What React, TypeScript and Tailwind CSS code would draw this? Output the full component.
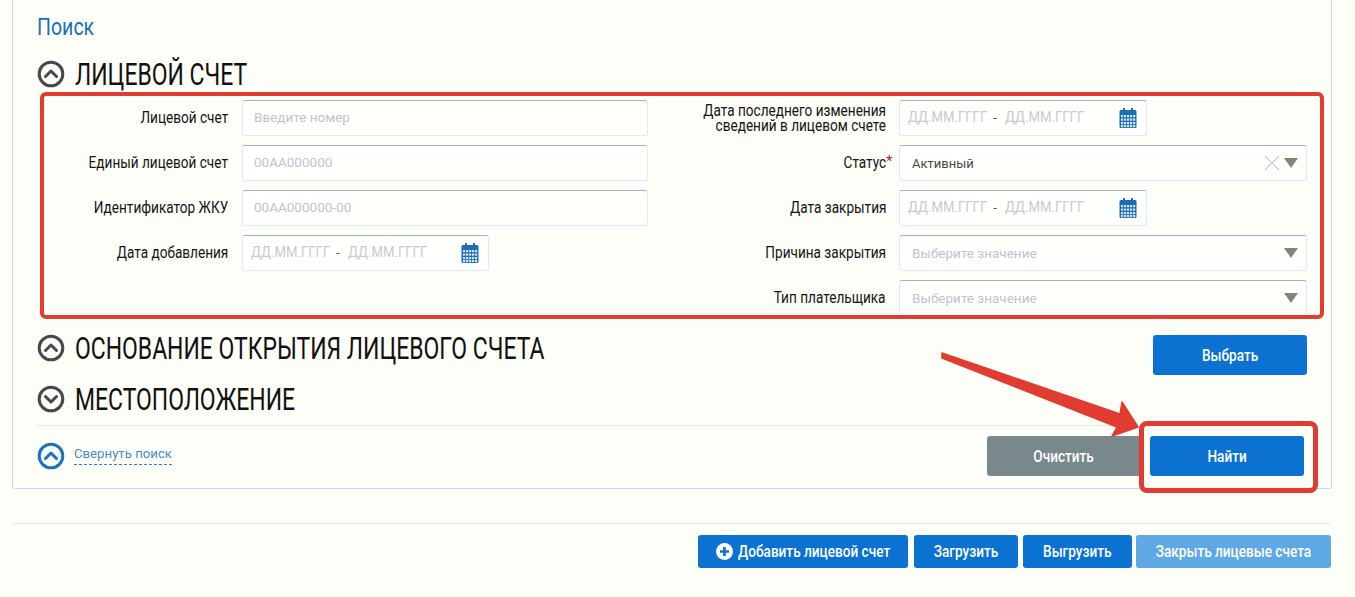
const FONT = "font-['Roboto','Liberation_Sans',sans-serif]";

function Chevron({ down = false, blue = false }: { down?: boolean; blue?: boolean }) {
  const c = blue ? "#1673c4" : "#48484c";
  return (
    <svg width="28" height="28" viewBox="0 0 28 28" className="shrink-0">
      <circle cx="14" cy="14" r="11.8" fill="none" stroke={c} strokeWidth="3" />
      <path d={down ? "M8.5 11.5 L14 17 L19.5 11.5" : "M8.5 16.5 L14 11 L19.5 16.5"} fill="none" stroke={c} strokeWidth="3" strokeLinecap="round" strokeLinejoin="round" />
    </svg>
  );
}

function Calendar() {
  return (
    <svg width="18" height="20" viewBox="0 0 18 20" className="shrink-0">
      <rect x="4" y="0" width="2" height="4" fill="#1b6db5" />
      <rect x="12" y="0" width="2" height="4" fill="#1b6db5" />
      <rect x="0.5" y="2" width="17" height="18" rx="1.5" fill="#1b6db5" />
      <g fill="#cfe3f4">
        {[7, 10.5, 14, 17].map((y) =>
          [2, 5, 8, 11, 14].map((x) => <rect key={`${x}-${y}`} x={x} y={y} width="2.2" height="2.2" />)
        )}
      </g>
    </svg>
  );
}

function Narrow({ children, k = "left" }: { children: React.ReactNode; k?: "left" | "right" | "center" }) {
  const o = k === "left" ? "origin-left" : k === "right" ? "origin-right text-right" : "origin-center";
  return <span className={`inline-block whitespace-nowrap scale-x-[0.85] ${o}`}>{children}</span>;
}

function Label({ children, w }: { children: React.ReactNode; w: string }) {
  return (
    <div className={`${w} shrink-0 text-right text-[16px] leading-[15px] text-[#141414] pb-[1px]`}>
      {children}
    </div>
  );
}

const box = "h-[36px] rounded-[3px] border border-[#d8ecf9] border-t-[#9db4bd] flex items-center bg-[#fffffb]";

function TextInput({ ph }: { ph: string }) {
  return (
    <div className={`${box} w-[406px] pl-[11px] pb-[1px] text-[13.5px] text-[#c4bfd2]`}>{ph}</div>
  );
}

function DateInput({ w }: { w: string }) {
  return (
    <div className={`${box} ${w} pl-[8px] pr-[9px] text-[15.5px] text-[#c6cad6]`}>
      <div className="w-[77px]"><Narrow>ДД.ММ.ГГГГ</Narrow></div>
      <div className="w-[20px] text-center text-[#555] text-[13px]">-</div>
      <div className="w-[77px]"><Narrow>ДД.ММ.ГГГГ</Narrow></div>
      <div className="ml-auto"><Calendar /></div>
    </div>
  );
}

function Arrow() {
  return (
    <svg width="14" height="10" viewBox="0 0 14 10" className="shrink-0">
      <path d="M0 0 H14 L7 10 Z" fill="#84847a" />
    </svg>
  );
}

function Select({ value, ph, clear }: { value?: string; ph?: string; clear?: boolean }) {
  return (
    <div className={`${box} w-[408px] pl-[12px] pr-[8px] ${value ? "text-[13px] text-[#4a4a4a]" : "text-[13.5px] text-[#c2c2c8]"}`}>
      <span className="pt-[1px]">{value ?? ph}</span>
      <div className="ml-auto flex items-center gap-[4px]">
        {clear && (
          <svg width="16" height="16" viewBox="0 0 16 16">
            <path d="M1 1 L15 15 M15 1 L1 15" stroke="#c3ccd4" strokeWidth="1.2" />
          </svg>
        )}
        <Arrow />
      </div>
    </div>
  );
}

function Heading({ children, down }: { children: string; down?: boolean }) {
  return (
    <div className="flex items-center gap-[10px] h-[30px]">
      <Chevron down={down} />
      <span className="text-[31px] leading-[30px] pt-[2px] text-[#111] font-normal inline-block whitespace-nowrap origin-left scale-x-[0.74]">
        {children}
      </span>
    </div>
  );
}

function Btn({ children, w, h, bg = "bg-[#0b72d2]" }: { children: React.ReactNode; w: string; h: string; bg?: string }) {
  return (
    <div className={`${w} ${h} ${bg} rounded-[3px] flex items-center justify-center text-white text-[16px] font-medium`}>
      {children}
    </div>
  );
}

export default function App() {
  return (
    <div className={`${FONT} relative w-[1355px] h-[597px] overflow-hidden bg-[#fefef8]`}>
      <div className="ml-[12px] w-[1320px] h-[489px] border-x border-b border-[#bddcf1] rounded-b-[3px] pl-[24px] pr-[24px] pt-[15px]">
        <div className="text-[23px] leading-[26px] text-[#1a70b8]"><Narrow>Поиск</Narrow></div>

        <div className="mt-[18px]"><Heading>ЛИЦЕВОЙ СЧЕТ</Heading></div>

        <div className="mt-[11px] flex h-[214px] overflow-hidden">
          <div className="w-[611px] shrink-0 flex flex-col gap-[9px]">
            {[
              ["Лицевой счет", <TextInput ph="Введите номер" />],
              ["Единый лицевой счет", <TextInput ph="00АА000000" />],
              ["Идентификатор ЖКУ", <TextInput ph="00АА000000-00" />],
              ["Дата добавления", <DateInput w="w-[247px]" />],
            ].map(([l, c], i) => (
              <div key={i} className="flex items-center gap-[14px]">
                <Label w="w-[191px]"><Narrow k="right">{l}</Narrow></Label>
                {c}
              </div>
            ))}
          </div>
          <div className="flex-1 flex flex-col gap-[9px]">
            <div className="flex items-center gap-[13px]">
              <Label w="w-[238px]">
                <Narrow k="right">Дата последнего изменения<br />сведений в лицевом счете</Narrow>
              </Label>
              <DateInput w="w-[248px]" />
            </div>
            <div className="flex items-center gap-[13px]">
              <Label w="w-[238px]">
                <Narrow k="right">Статус</Narrow>
                <span className="absolute text-[#a52a2a] text-[15px] leading-[12px]">*</span>
              </Label>
              <Select value="Активный" clear />
            </div>
            <div className="flex items-center gap-[13px]">
              <Label w="w-[238px]"><Narrow k="right">Дата закрытия</Narrow></Label>
              <DateInput w="w-[248px]" />
            </div>
            <div className="flex items-center gap-[13px]">
              <Label w="w-[238px]"><Narrow k="right">Причина закрытия</Narrow></Label>
              <Select ph="Выберите значение" />
            </div>
            <div className="flex items-center gap-[13px]">
              <Label w="w-[238px]"><Narrow k="right">Тип плательщика</Narrow></Label>
              <Select ph="Выберите значение" />
            </div>
          </div>
        </div>

        <div className="mt-[21px] flex items-start justify-between h-[40px]">
          <div className="-mt-[2px]"><Heading>ОСНОВАНИЕ ОТКРЫТИЯ ЛИЦЕВОГО СЧЕТА</Heading></div>
          <Btn w="w-[154px]" h="h-[40px] pt-[1px]"><Narrow k="center">Выбрать</Narrow></Btn>
        </div>

        <div className="mt-[9px]"><Heading down>МЕСТОПОЛОЖЕНИЕ</Heading></div>

        <div className="mt-[11px] border-t border-[#e9e9e2] pt-[10px] flex items-start">
          <div className="mt-[6px] flex items-center gap-[9px]">
            <Chevron blue />
            <span className="mb-[2px] text-[13.2px] leading-[16px] text-[#4a8cc2] border-b border-dashed border-[#3a80bb] pb-[2px]">Свернуть поиск</span>
          </div>
          <div className="ml-auto flex gap-[9px] mr-[3px]">
            <Btn w="w-[154px]" h="h-[40px] pt-[1px]" bg="bg-[#78888d]"><Narrow k="center">Очистить</Narrow></Btn>
            <Btn w="w-[154px]" h="h-[40px] pt-[1px]"><Narrow k="center">Найти</Narrow></Btn>
          </div>
        </div>
      </div>

      <div className="mt-[34px] ml-[12px] w-[1319px] border-t border-[#e9e9e2] pt-[11px] flex justify-end">
        <Btn w="w-[210px]" h="h-[33px]">
          <span className="flex items-center gap-[5px] -ml-[2px]">
            <svg width="17" height="17" viewBox="0 0 17 17" className="shrink-0">
              <circle cx="8.5" cy="8.5" r="8.5" fill="#fff" />
              <path d="M8.5 4 V13 M4 8.5 H13" stroke="#0b72d2" strokeWidth="2.6" />
            </svg>
            <span className="w-[151px]"><Narrow>Добавить лицевой счет</Narrow></span>
          </span>
        </Btn>
        <div className="ml-[6px]"><Btn w="w-[104px]" h="h-[33px]"><Narrow k="center">Загрузить</Narrow></Btn></div>
        <div className="ml-[5px]"><Btn w="w-[109px]" h="h-[33px]"><Narrow k="center">Выгрузить</Narrow></Btn></div>
        <div className="ml-[4px]"><Btn w="w-[195px]" h="h-[33px]" bg="bg-[#5fa8e6]"><Narrow k="center">Закрыть лицевые счета</Narrow></Btn></div>
      </div>

      <div className="absolute left-[40px] top-[92px] w-[1284px] h-[227px] border-[4px] border-[#e03c31] rounded-[6px]" />
      <div className="absolute left-[1139px] top-[421px] w-[179px] h-[72px] border-[5px] border-[#e03c31] rounded-[8px]" />
      <svg className="absolute left-[930px] top-[340px]" width="220" height="105" viewBox="930 340 220 105">
        <path d="M942 353 L1120 414 L1122 402 L1138 427 L1112 436 L1117 427 L942 358 Z" fill="#e03c31" stroke="#e03c31" strokeWidth="1.5" strokeLinejoin="round" />
      </svg>
    </div>
  );
}
